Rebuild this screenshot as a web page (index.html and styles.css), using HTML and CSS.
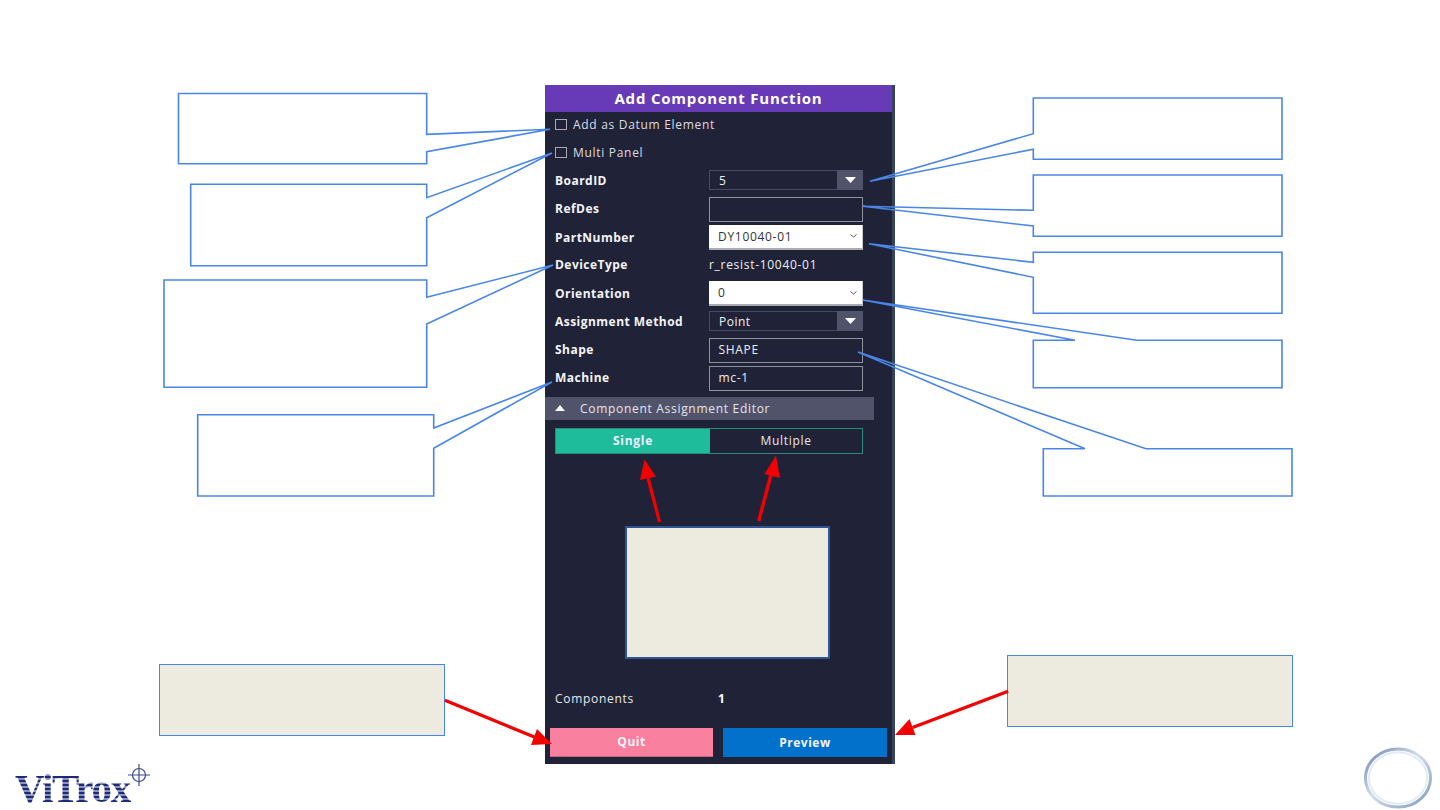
FILE: index.html
```html
<!DOCTYPE html>
<html lang="en">
<head>
<meta charset="utf-8">
<title>Add Component Function</title>
<link rel="stylesheet" href="styles.css">
</head>
<body>
<main class="slide">
  <section class="panel">
    <h1 class="panel-title">Add Component Function</h1>
    <div class="form">
      <div class="row"><label class="check"><span class="box"></span>Add as Datum Element</label></div>
      <div class="row"><label class="check"><span class="box"></span>Multi Panel</label></div>
      <div class="row"><span class="label">BoardID</span>
        <div class="combo dark short"><span>5</span><span class="combo-btn"><svg width="11" height="6" viewBox="0 0 11 6"><path d="M0 0h11L5.500 6z" fill="#fff"/></svg></span></div></div>
      <div class="row"><span class="label">RefDes</span><div class="field"></div></div>
      <div class="row"><span class="label">PartNumber</span>
        <div class="combo light"><span>DY10040-01</span><svg class="chev" width="7" height="4" viewBox="0 0 7 4"><path d="M.5.5 3.500 3 6.500.5" fill="none" stroke="#555" stroke-width="1"/></svg></div></div>
      <div class="row"><span class="label">DeviceType</span><span class="value">r_resist-10040-01</span></div>
      <div class="row"><span class="label">Orientation</span>
        <div class="combo light"><span>0</span><svg class="chev" width="7" height="4" viewBox="0 0 7 4"><path d="M.5.5 3.500 3 6.500.5" fill="none" stroke="#555" stroke-width="1"/></svg></div></div>
      <div class="row"><span class="label">Assignment Method</span>
        <div class="combo dark short"><span>Point</span><span class="combo-btn"><svg width="11" height="6" viewBox="0 0 11 6"><path d="M0 0h11L5.500 6z" fill="#fff"/></svg></span></div></div>
      <div class="row"><span class="label">Shape</span><div class="field">SHAPE</div></div>
      <div class="row"><span class="label">Machine</span><div class="field">mc-1</div></div>
    </div>
    <div class="editor-bar"><svg width="10" height="6" viewBox="0 0 10 6"><path d="M5 0l5 6H0z" fill="#fff"/></svg><span>Component Assignment Editor</span></div>
    <div class="toggle"><span class="toggle-on">Single</span><span class="toggle-off">Multiple</span></div>
    <div class="note"></div>
    <div class="count"><span>Components</span><span class="count-value">1</span></div>
    <div class="actions"><button class="btn quit">Quit</button><button class="btn preview">Preview</button></div>
  </section>

  <div class="beige beige-left"></div>
  <div class="beige beige-right"></div>

  <svg class="overlay" width="1440" height="810" viewBox="0 0 1440 810">
    <g fill="none" stroke="#4a86e8" stroke-width="1.600">
      <path d="M178.500 93.500H426.700V134.300L550 129.300 426.700 151.700V163.700H178.500Z"/>
      <path d="M190.700 184.300H426.700V197.700L552 153 426.700 217.700V265.700H190.700Z"/>
      <path d="M164 280H426.700V297.300L553 265 426.700 324V387.300H164Z"/>
      <path d="M197.700 414.700H433.700V428L552 382 433.700 448.300V496H197.700Z"/>
      <path d="M1033.300 98H1282V159.300H1033.300V149.300L870 181.300 1033.300 133.700Z"/>
      <path d="M1033.300 175H1282V236.300H1033.300V226L862.700 206.300 1033.300 210.300Z"/>
      <path d="M1033.300 252.300H1282V313.300H1033.300V277.300L869 243.700 1033.300 262.300Z"/>
      <path d="M1033.300 340.300H1075L862.700 300 1136.700 340.300H1282V387.700H1033.300Z"/>
      <path d="M1043.300 448.700H1085L858 352 1146 448.700H1292V496H1043.300Z"/>
    </g>
    <g fill="#f40000">
      <path d="M661 521.500 649.800 478 646.500 478.800 658 522.300 Z"/>
      <path d="M644.500 459.500 640 480 656 476.500Z"/>
      <path d="M757 520.800 769.700 473 773 474 760.300 521.600Z"/>
      <path d="M776 455.500 764.500 474 780 478Z"/>
      <path d="M445.500 698.800 535 735.500 533.700 738.500 444.300 701.800Z"/>
      <path d="M552 744 531 745 537 729Z"/>
      <path d="M1007.600 689.800 912 726 913.200 729 1008.800 692.800Z"/>
      <path d="M895 735 915.500 735 909.500 719Z"/>
    </g>
  </svg>

  <div class="logo"><span class="logo-word">ViTrox</span>
    <svg class="logo-mark" width="24" height="24" viewBox="0 0 24 24"><g fill="none" stroke="#3a4a8c" stroke-width="1.200"><circle cx="12" cy="12" r="6.500"/><path d="M12 1v22M1 12h22"/></g></svg>
  </div>

  <svg class="ring" width="74" height="66" viewBox="0 0 74 66">
    <defs>
      <linearGradient id="ringg" x1="0" y1="0" x2="1" y2="1">
        <stop offset="0" stop-color="#6d83b5"/><stop offset=".45" stop-color="#d3deea"/><stop offset="1" stop-color="#7f9aba"/>
      </linearGradient>
    </defs>
    <ellipse cx="37" cy="33" rx="32.500" ry="29" fill="none" stroke="url(#ringg)" stroke-width="3"/>
    <ellipse cx="37" cy="33" rx="29" ry="25.800" fill="none" stroke="#e2ecf2" stroke-width="2"/>
  </svg>
</main>
</body>
</html>
```

FILE: styles.css
```css
html, body { margin: 0; padding: 0; background: #fff; }
.slide { position: relative; width: 1440px; height: 810px; overflow: hidden; background: #fff; font-family: "Open Sans", "Noto Sans", sans-serif; }

.panel { position: absolute; left: 545px; top: 85px; width: 347px; height: 679px; border-right: 3px solid #36435c; background: #202338; color: #f1f1f4; display: flex; flex-direction: column; font-size: 12px; letter-spacing: .7px; }
.panel-title { margin: 0; height: 27px; line-height: 26px; text-align: center; font-size: 15px; font-weight: 700; letter-spacing: .8px; color: #fff; background: #673ab7; }

.form { display: grid; grid-auto-rows: 24px; row-gap: 4.2px; padding-left: 10px; width: 308px; }
.row { display: grid; grid-template-columns: 154px 154px; align-items: center; }
.label { font-weight: 700; color: #f4f4f6; letter-spacing: .47px; white-space: nowrap; padding-bottom: .5px; }
.value { color: #f1f1f4; white-space: nowrap; }

.check { grid-column: 1 / 3; display: flex; align-items: center; gap: 6px; color: #dcdce2; line-height: 15px; }
.box { width: 12px; height: 11px; border: 1px solid #a8a9b3; box-sizing: border-box; margin-top: .5px; }

.combo { box-sizing: border-box; width: 154px; display: flex; align-items: center; justify-content: space-between; }
.combo.dark { height: 20px; border: 1px solid #474a60; padding-left: 9px; letter-spacing: .5px; }
.combo-btn { width: 26px; height: 20px; margin: -1px; background: #50536a; display: flex; align-items: center; justify-content: center; }
.combo.light { height: 25px; background: #fff; color: #333; padding: 0 5px 0 9px; border-bottom: 2px solid #a9aab2; border-right: 1px solid #c9cad0; }
.chev { display: block; }
.field { box-sizing: border-box; width: 154px; height: 25px; line-height: 22px; border: 1.500px solid #8f919c; padding-left: 8.500px; color: #eeeef2; }

.editor-bar { margin-top: 7px; width: 329px; height: 23px; background: #50536a; display: flex; align-items: center; gap: 15px; padding-left: 10px; box-sizing: border-box; color: #e6e6ec; }
.toggle { margin: 8px 0 0 10px; width: 308px; height: 26px; box-sizing: border-box; border: 1.500px solid #2a8a7c; display: grid; grid-template-columns: 154px 1fr; text-align: center; line-height: 23px; }
.toggle-on { background: #1fbc9c; font-weight: 700; color: #eef; }
.toggle-off { color: #e6e6ec; }

.note { margin: 72px 0 0 80px; width: 205px; height: 133px; box-sizing: border-box; background: #edeadf; border: 2px solid #2f5597; flex: none; }
.count { margin: 30px 0 0 10px; display: grid; grid-template-columns: 163px 1fr; height: 18px; line-height: 19px; color: #e8e8ee; }
.count-value { font-weight: 700; color: #fff; }

.actions { margin: auto 0 7px 5px; display: flex; gap: 10px; }
.btn { width: 163px; height: 29px; border: 0; padding: 0 0 1px; font: 700 12px "Open Sans", "Noto Sans", sans-serif; letter-spacing: .5px; color: #f4f4f8; }
.btn.preview { width: 164px; background: #0271cc; }
.btn.quit { background: #f9809f; border-bottom: 1px solid #c2647e; }

.beige { position: absolute; box-sizing: border-box; width: 286px; height: 72px; background: #edeadf; border: 1.500px solid #4a86e8; }
.beige-left { left: 159px; top: 664px; }
.beige-right { left: 1007px; top: 655px; }

.overlay { position: absolute; left: 0; top: 0; pointer-events: none; }

.logo { position: absolute; left: 15px; top: 760px; width: 140px; height: 46px; }
.logo-word { display: block; padding-top: 9px; font: 700 41px/38px "Liberation Serif", serif; letter-spacing: -1.200px; white-space: nowrap; color: transparent; background: repeating-linear-gradient(180deg, #1e2a78 0 2.500px, #8d93bf 2.500px 4px); -webkit-background-clip: text; background-clip: text; width: 118px; }
.logo-mark { position: absolute; left: 112px; top: 3px; }

.ring { position: absolute; left: 1361px; top: 745px; }
```
